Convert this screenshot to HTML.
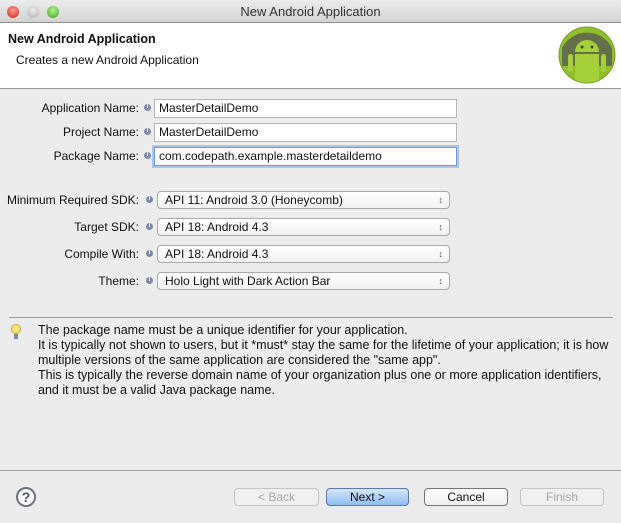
<!DOCTYPE html>
<html><head><style>
*{margin:0;padding:0;box-sizing:border-box}
body{width:621px;height:523px;overflow:hidden;background:#ececec;font-family:"Liberation Sans",sans-serif;font-size:11.5px;color:#111;position:relative}
.a{position:absolute}
.tb{left:0;top:0;width:621px;height:23px;background:linear-gradient(#ececec,#d3d3d3);border-bottom:1px solid #8e8e8e;text-align:center;line-height:23px;font-size:13px;color:#333}
.dot{width:12px;height:12px;border-radius:50%;top:6px}
.hd{left:0;top:23px;width:621px;height:66px;background:#fff;border-bottom:1px solid #9a9a9a}
.lbl{right:482px;text-align:right;white-space:nowrap;font-size:12px}
.info{width:7px;height:7px;border-radius:50%;background:#7b8aa8;color:#fff;font-size:6px;line-height:7px;text-align:center;font-weight:bold}
.tf{left:154px;width:303px;height:19px;background:#fff;border:1px solid #b5b5b5;padding-left:4px;line-height:17px;font-size:12px}
.sel{left:157px;width:293px;height:18px;border:1px solid #a9a9a9;border-radius:4px;background:linear-gradient(#fff,#f1f1f1);padding-left:7px;line-height:16px;font-size:12px}
.sel:after{content:"\2195";position:absolute;right:6px;top:0;font-size:9px;color:#555}
.btn{top:488px;height:18px;border:1px solid #9d9d9d;border-radius:4px;background:linear-gradient(#fff,#efefef);text-align:center;line-height:16px;font-size:12px}
.dis{color:#a8a8a8;border-color:#c4c4c4;background:#f0f0f0}
.hint{left:38px;top:323px;line-height:15px;font-size:12.5px;white-space:nowrap}
</style></head><body>
<div class="a tb">New Android Application</div>
<div class="a dot" style="left:7px;background:radial-gradient(circle at 50% 35%,#ff9a93,#d0241c)"></div>
<div class="a dot" style="left:27px;background:radial-gradient(circle at 50% 35%,#eee,#b0b0b0)"></div>
<div class="a dot" style="left:47px;background:radial-gradient(circle at 50% 35%,#b6ef8e,#3fa51c)"></div>
<div class="a hd"></div>
<div class="a" style="left:8px;top:32px;font-weight:bold;font-size:12.5px">New Android Application</div>
<div class="a" style="left:16px;top:53px;font-size:12px">Creates a new Android Application</div>
<svg class="a" style="left:558px;top:26px" width="58" height="58" viewBox="0 0 58 58">
<defs><clipPath id="c"><circle cx="29" cy="29" r="27.5"/></clipPath></defs>
<circle cx="29" cy="29" r="28" fill="#8fbf2a" stroke="#7a9a30"/>
<g clip-path="url(#c)">
<path d="M4 22 A28 28 0 0 1 54 22 L54 40 L4 40Z" fill="#555" opacity=".75"/>
<path d="M17 26 A12 12 0 0 1 41 26Z" fill="#a4d03a"/>
<rect x="17" y="28" width="24" height="30" fill="#a4d03a"/>
<rect x="10" y="28" width="5" height="18" rx="2.5" fill="#a4d03a"/>
<rect x="43" y="28" width="5" height="18" rx="2.5" fill="#a4d03a"/>
</g>
<circle cx="24" cy="21" r="1.5" fill="#444"/><circle cx="34" cy="21" r="1.5" fill="#444"/>
</svg>
<div class="a lbl" style="top:101px">Application Name:</div><div class="a info" style="left:144px;top:104px">i</div>
<div class="a tf" style="top:99px">MasterDetailDemo</div>
<div class="a lbl" style="top:125px">Project Name:</div><div class="a info" style="left:144px;top:128px">i</div>
<div class="a tf" style="top:123px">MasterDetailDemo</div>
<div class="a lbl" style="top:149px">Package Name:</div><div class="a info" style="left:144px;top:152px">i</div>
<div class="a tf" style="top:147px;border:1px solid #6d9ad8;box-shadow:0 0 0 2px #a8c6ee">com.codepath.example.masterdetaildemo</div>
<div class="a lbl" style="top:193px">Minimum Required SDK:</div><div class="a info" style="left:146px;top:196px">i</div>
<div class="a sel" style="top:191px">API 11: Android 3.0 (Honeycomb)</div>
<div class="a lbl" style="top:220px">Target SDK:</div><div class="a info" style="left:146px;top:223px">i</div>
<div class="a sel" style="top:218px">API 18: Android 4.3</div>
<div class="a lbl" style="top:247px">Compile With:</div><div class="a info" style="left:146px;top:250px">i</div>
<div class="a sel" style="top:245px">API 18: Android 4.3</div>
<div class="a lbl" style="top:274px">Theme:</div><div class="a info" style="left:146px;top:277px">i</div>
<div class="a sel" style="top:272px">Holo Light with Dark Action Bar</div>
<div class="a" style="left:9px;top:317px;width:604px;height:1px;background:#9a9a9a"></div>
<svg class="a" style="left:11px;top:324px" width="10" height="16"><circle cx="5" cy="5" r="4.5" fill="#ffe680" stroke="#c9a530"/><rect x="3" y="10" width="4" height="5" fill="#7a8aa0"/></svg>
<div class="a hint">The package name must be a unique identifier for your application.<br>It is typically not shown to users, but it *must* stay the same for the lifetime of your application; it is how<br>multiple versions of the same application are considered the "same app".<br>This is typically the reverse domain name of your organization plus one or more application identifiers,<br>and it must be a valid Java package name.</div>
<div class="a" style="left:0;top:470px;width:621px;height:1px;background:#a0a0a0"></div>
<div class="a" style="left:16px;top:487px;width:20px;height:20px;border-radius:50%;border:2px solid #6d7480;text-align:center;line-height:16px;font-weight:bold;font-size:14px;color:#555;background:#fafafa">?</div>
<div class="a btn dis" style="left:234px;width:85px">&lt; Back</div>
<div class="a btn" style="left:326px;width:83px;border-color:#5a78b0;background:linear-gradient(#d4e6fb,#90bdf0)">Next &gt;</div>
<div class="a btn" style="left:424px;width:84px;border-color:#777">Cancel</div>
<div class="a btn dis" style="left:520px;width:84px">Finish</div>
</body></html>
